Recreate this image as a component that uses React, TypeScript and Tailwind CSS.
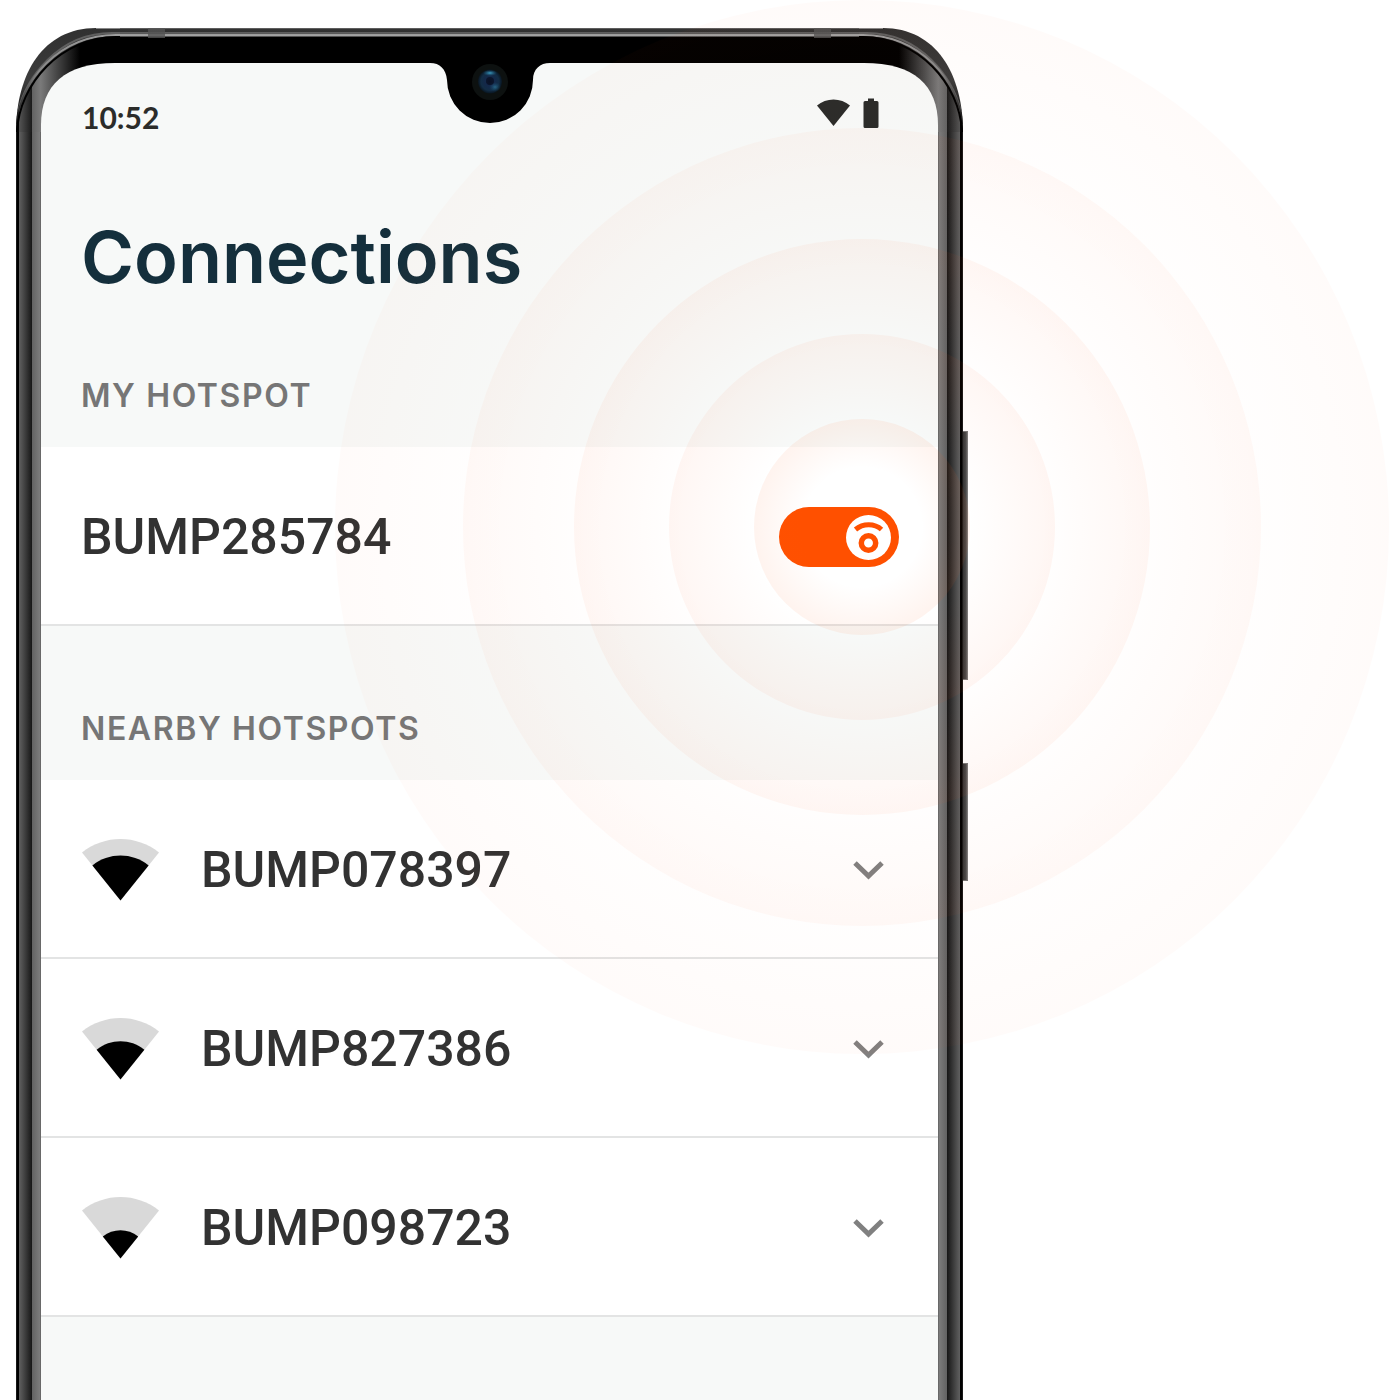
import React from "react";

const hotspots = [
  { name: "BUMP078397", scale: 0.73 },
  { name: "BUMP827386", scale: 0.62 },
  { name: "BUMP098723", scale: 0.46 },
];

function SignalIcon({ scale }: { scale: number }) {
  const fan = "M0 0L-38.5 -48C-16 -66 16 -66 38.5 -48Z";
  return (
    <svg className="h-[62px] w-[78px] shrink-0" viewBox="-39.5 -61.5 78 62" aria-hidden="true">
      <path d={fan} fill="#d9d9d9" />
      <path d={fan} fill="#000" transform={`scale(${scale})`} />
    </svg>
  );
}

function Chevron() {
  return (
    <svg className="h-5 w-8" viewBox="0 0 32 20" fill="none" aria-hidden="true">
      <path d="M3 3L16.500 16L30 3" stroke="#808080" strokeWidth="5" />
    </svg>
  );
}

function Corner({ id, className }: { id: string; className: string }) {
  return (
    <svg className={className} viewBox="16 28 104 104" width="104" height="104" aria-hidden="true">
      <defs>
        <linearGradient id={`${id}-shell`} x1="0" x2="0" y1="28" y2="132" gradientUnits="userSpaceOnUse">
          <stop offset="0" stopColor="#303030" />
          <stop offset="0.5" stopColor="#3c3c3c" />
          <stop offset="1" stopColor="#101010" />
        </linearGradient>
        <linearGradient id={`${id}-bezel`} x1="32" x2="80" y1="0" y2="0" gradientUnits="userSpaceOnUse">
          <stop offset="0" stopColor="#626262" />
          <stop offset="0.18" stopColor="#7a7a7a" />
          <stop offset="0.45" stopColor="#505050" />
          <stop offset="1" stopColor="#000" />
        </linearGradient>
        <linearGradient id={`${id}-rail`} x1="19" x2="32" y1="0" y2="0" gradientUnits="userSpaceOnUse">
          <stop offset="0" stopColor="#555" />
          <stop offset="1" stopColor="#1a1a1a" />
        </linearGradient>
        <linearGradient id={`${id}-shine`} x1="16" x2="120" y1="132" y2="28" gradientUnits="userSpaceOnUse">
          <stop offset="0.1" stopColor="#222" />
          <stop offset="0.4" stopColor="#888" />
          <stop offset="1" stopColor="#a0a0a0" />
        </linearGradient>
        <clipPath id={`${id}-inner`}>
          <path d="M16 132C18 84 60 37 116 37L120 37V132Z" />
        </clipPath>
      </defs>
      <path d="M16 132C16 74 43 28 96 28H120V132Z" fill={`url(#${id}-shell)`} />
      <path d="M96 28.500H120" stroke="#888" />
      <path d="M18 112C26 78 58 33 112 33L120 33" fill="none" stroke="#606060" strokeWidth="2" />
      <path d="M17 124C20 80 60 35 116 35L120 35" fill="none" stroke={`url(#${id}-shine)`} strokeWidth="2" />
      <g clipPath={`url(#${id}-inner)`}>
        <rect x="16" y="28" width="104" height="104" fill={`url(#${id}-bezel)`} />
        <rect x="16" y="28" width="3" height="104" fill="#050505" />
        <rect x="19" y="28" width="13" height="104" fill={`url(#${id}-rail)`} />
      </g>
      <path d="M17 132C19 84 61 37 116 37L120 37" fill="none" stroke="#000" strokeWidth="2" />
      <path d="M41 132V125C41 85 65 63 115 63H120V132Z" fill="#f7f9f8" />
    </svg>
  );
}

function PhoneFrame() {
  const rail =
    "w-[25px] bg-[linear-gradient(90deg,#303030_0px,#000_1px,#000_3px,#606060_3px,#505050_6px,#1c1c1c_15px,#161616_16px,#626262_16px,#7c7c7c_24px,#555_25px)]";
  return (
    <div className="absolute inset-0 flex flex-col" aria-hidden="true">
      <div className="flex h-[104px]">
        <Corner id="tl" className="shrink-0" />
        <div className="flex flex-1 flex-col bg-[#f7f9f8]">
          <div className="flex h-[35px] justify-between bg-[linear-gradient(180deg,#888_0px,#333_1px,#303030_4px,#606060_4px,#555_6px,#999_6px,#a5a5a5_8px,#000_9px,#000_35px)] px-7">
            <span className="h-[10px] w-[17px] bg-[#555]/80" />
            <span className="h-[10px] w-[17px] bg-[#555]/80" />
          </div>
          <svg className="mx-auto h-[60px] w-[120px]" viewBox="430 63 120 60">
            <defs>
              <radialGradient id="lens">
                <stop offset="0" stopColor="#080d20" />
                <stop offset="0.35" stopColor="#14284a" />
                <stop offset="0.75" stopColor="#122c45" />
                <stop offset="1" stopColor="#091520" />
              </radialGradient>
              <radialGradient id="glint">
                <stop offset="0" stopColor="#3b9cc0" />
                <stop offset="1" stopColor="#1c5c80" stopOpacity="0" />
              </radialGradient>
            </defs>
            <path d="M430 63C440 63 446 69 447 80A43 43 0 0 0 533 80C533 69 540 63 550 63Z" fill="#000" />
            <circle cx="490" cy="82" r="18" fill="#0d1110" />
            <circle cx="490" cy="81.500" r="12" fill="url(#lens)" />
            <ellipse cx="490" cy="73" rx="7" ry="3" fill="url(#glint)" />
            <ellipse cx="495" cy="87" rx="6" ry="5" fill="url(#glint)" opacity="0.5" />
            <circle cx="490" cy="81" r="4" fill="#0a1226" opacity="0.8" />
          </svg>
        </div>
        <Corner id="tr" className="shrink-0 -scale-x-100" />
      </div>
      <div className="flex flex-1">
        <div className={rail} />
        <div className="flex-1 bg-[#f7f9f8]" />
        <div className={`${rail} -scale-x-100`} />
      </div>
      <div className="absolute top-[403px] left-full h-[249px] w-[5px] border-y border-[#777] bg-[linear-gradient(90deg,#333,#4a4a4a_60%,#888)]" />
      <div className="absolute top-[735px] left-full h-[118px] w-[5px] border-y border-[#777] bg-[linear-gradient(90deg,#333,#4a4a4a_60%,#888)]" />
    </div>
  );
}

function Ripples() {
  return (
    <div className="pointer-events-none absolute top-[-28px] right-[-426px] size-[1054px]" aria-hidden="true">
      <div className="absolute inset-0 rounded-full bg-[radial-gradient(closest-side,rgba(255,80,20,0)_66%,rgba(255,80,20,0.024)_100%)]" />
      <div className="absolute inset-[128px] rounded-full bg-[radial-gradient(closest-side,rgba(255,80,20,0)_64%,rgba(255,80,20,0.036)_100%)]" />
      <div className="absolute inset-[239px] rounded-full bg-[radial-gradient(closest-side,rgba(255,80,20,0)_62%,rgba(255,80,20,0.046)_100%)]" />
      <div className="absolute inset-[334px] rounded-full bg-[radial-gradient(closest-side,rgba(255,80,20,0)_55%,rgba(255,80,20,0.052)_100%)]" />
      <div className="absolute inset-[419px] rounded-full bg-[radial-gradient(closest-side,rgba(255,90,20,0)_55%,rgba(255,90,20,0.07)_100%)]" />
    </div>
  );
}

function HotspotToggle() {
  return (
    <label className="relative block h-[60px] w-[120px] cursor-pointer">
      <input
        type="checkbox"
        role="switch"
        defaultChecked
        aria-label="BUMP285784 hotspot"
        className="absolute inset-0 size-full cursor-pointer appearance-none rounded-full bg-gray-400 checked:bg-[#ff5000]"
      />
      <svg className="pointer-events-none absolute top-2 right-2 size-[45px]" viewBox="0 0 45 45" fill="none" aria-hidden="true">
        <circle cx="22.500" cy="22.500" r="22.500" fill="#fff" />
        <path d="M9.500 14.500C17 8 28.500 8 35.500 14.500" stroke="#ff5000" strokeWidth="5" />
        <circle cx="22.500" cy="28" r="7.200" stroke="#ff5000" strokeWidth="5.500" />
      </svg>
    </label>
  );
}

function SectionTitle({ children }: { children: React.ReactNode }) {
  return (
    <h2 className="pl-10 font-['Inter',sans-serif] text-[32px] leading-10 font-semibold tracking-wider text-[#767676]">{children}</h2>
  );
}

export default function App() {
  return (
    <main className="flex min-h-screen overflow-hidden bg-white pt-7 font-['Roboto',sans-serif]">
      <div className="relative mr-[437px] ml-4 min-w-[640px] flex-1">
        <PhoneFrame />
        <div className="relative px-[25px] pt-[35px]">
          <header className="flex h-[100px] items-center justify-between pr-[58px] pl-[41px]">
            <time className="pt-2 font-['Lato',sans-serif] text-[30px] leading-10 font-bold text-[#2b2c2a]">10:52</time>
            <svg className="h-[30px] w-[64px]" viewBox="816 98 64 30" fill="#2b2c2a" aria-label="Wi-Fi and battery">
              <path d="M833.500 126L817 105.500C826 97.500 841 97.500 850 105.500Z" />
              <path d="M868 98.500h6v2.500h3q1.500 0 1.500 1.500v24q0 1.500-1.500 1.500h-12q-1.500 0-1.500-1.500v-24q0-1.500 1.500-1.500h3z" />
            </svg>
          </header>
          <h1 className="mt-11 pl-10 font-['Inter',sans-serif] text-[72px] leading-[100px] font-semibold text-[#142f3c]">Connections</h1>
          <div className="pt-[69px] pb-[31px]">
            <SectionTitle>MY HOTSPOT</SectionTitle>
          </div>
          <section className="flex h-[179px] items-center justify-between border-b-2 border-[#e3e4e4] bg-white pt-0.5 pr-[39px] pl-10">
            <span className="text-[50px] leading-[60px] font-medium text-[#323232]">BUMP285784</span>
            <HotspotToggle />
          </section>
          <div className="pt-[83px] pb-[31px]">
            <SectionTitle>NEARBY HOTSPOTS</SectionTitle>
          </div>
          <ul>
            {hotspots.map((h) => (
              <li key={h.name} className="border-b-2 border-[#e3e4e4] bg-white">
                <button type="button" className="flex h-[177px] w-full cursor-pointer items-center pt-0.5 pr-[54px] pl-10 text-left">
                  <SignalIcon scale={h.scale} />
                  <span className="ml-[42px] flex-1 text-[50px] leading-[60px] font-medium text-[#323232]">{h.name}</span>
                  <Chevron />
                </button>
              </li>
            ))}
          </ul>
        </div>
        <Ripples />
      </div>
    </main>
  );
}
